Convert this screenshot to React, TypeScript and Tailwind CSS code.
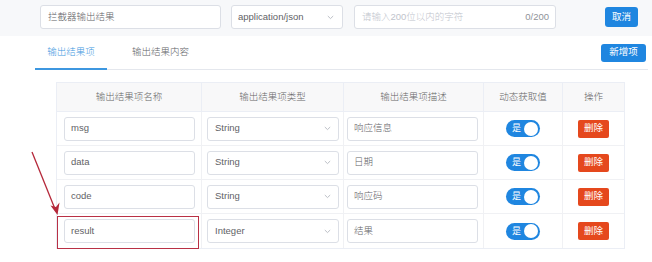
import React from "react";

const font = { fontFamily: '"Liberation Sans", "Noto Sans CJK SC", sans-serif' };

function Chevron() {
  return (
    <svg width="7" height="5" viewBox="0 0 7 5" className="shrink-0">
      <path d="M0.8 1 L3.5 3.6 L6.2 1" fill="none" stroke="#b4b8bf" strokeWidth="0.9" />
    </svg>
  );
}

function Toggle() {
  return (
    <div className="w-[34px] h-[17px] rounded-full bg-[#1f86e0] flex items-center justify-between pl-[6px] pr-[2px]">
      <span className="text-white text-[9px] leading-none font-normal">是</span>
      <span className="w-[14px] h-[14px] rounded-full bg-white"></span>
    </div>
  );
}

const rows = [
  { name: "msg", type: "String", desc: "响应信息" },
  { name: "data", type: "String", desc: "日期" },
  { name: "code", type: "String", desc: "响应码" },
  { name: "result", type: "Integer", desc: "结果" },
];

export default function App() {
  return (
    <div className="relative w-[652px] h-[262px] bg-white overflow-hidden text-[#5f6266] font-light" style={font}>
      {/* top bar */}
      <div className="h-[36px] bg-[#f7f8fa] flex items-start pt-[5px] pl-[40px]">
        <div className="w-[181px] h-[24px] bg-white border border-[#dcdfe6] rounded-[3px] flex items-center pl-[7px] text-[9.5px]">
          拦截器输出结果
        </div>
        <div className="ml-[10px] w-[112px] h-[24px] bg-white border border-[#dcdfe6] rounded-[3px] flex items-center justify-between pl-[6px] pr-[8px] text-[9.5px]">
          <span>application/json</span>
          <Chevron />
        </div>
        <div className="ml-[11px] w-[202px] h-[24px] bg-white border border-[#dcdfe6] rounded-[3px] flex items-center justify-between pl-[7px] pr-[6px] text-[9.5px]">
          <span className="text-[#c0c4cc]">请输入200位以内的字符</span>
          <span className="text-[#909399]">0/200</span>
        </div>
        <div className="ml-auto mr-[14px] mt-[2px] w-[33px] h-[20px] rounded-[3px] bg-[#1f86e0] text-white text-[9.5px] font-normal flex items-center justify-center">
          取消
        </div>
      </div>

      {/* tabs */}
      <div className="ml-[35px] mr-[4px] h-[34px] border-b border-[#e4e7ed] flex items-center relative">
        <div className="relative w-[72px] h-full flex items-center justify-center text-[9.5px] text-[#3d97e0]">
          输出结果项
          <div className="absolute left-0 right-0 bottom-[-1px] h-[2px] bg-[#3d97e0]"></div>
        </div>
        <div className="ml-[25px] text-[9.5px] text-[#606266]">输出结果内容</div>
        <div className="ml-auto mr-[2px] w-[45px] h-[18px] rounded-[3px] bg-[#1f86e0] text-white text-[9.5px] font-normal flex items-center justify-center">
          新增项
        </div>
      </div>

      {/* table */}
      <div className="ml-[56px] mt-[12px] w-[569px] border border-[#ebeef5] text-[9.5px]">
        <div className="flex h-[29px] bg-[#f8f8f9] text-[#666] border-b border-[#ebeef5]">
          <div className="w-[145px] flex items-center justify-center border-r border-[#ebeef5]">输出结果项名称</div>
          <div className="w-[142px] flex items-center justify-center border-r border-[#ebeef5]">输出结果项类型</div>
          <div className="w-[140px] flex items-center justify-center border-r border-[#ebeef5]">输出结果项描述</div>
          <div className="w-[79px] flex items-center justify-center border-r border-[#ebeef5]">动态获取值</div>
          <div className="flex-1 flex items-center justify-center">操作</div>
        </div>
        {rows.map((r, i) => (
          <div key={r.name} className={"flex h-[34px] " + (i < rows.length - 1 ? "border-b border-[#f0f1f4]" : "")}>
            <div className="w-[145px] flex items-center pl-[7px] pr-[6px] border-r border-[#f0f1f4]">
              <div className="w-full h-[24px] border border-[#dcdfe6] rounded-[3px] flex items-center pl-[6px]">{r.name}</div>
            </div>
            <div className="w-[142px] flex items-center pl-[5px] pr-[4px] border-r border-[#f0f1f4]">
              <div className="w-full h-[24px] border border-[#dcdfe6] rounded-[3px] flex items-center justify-between pl-[7px] pr-[7px]">
                <span>{r.type}</span>
                <Chevron />
              </div>
            </div>
            <div className="w-[140px] flex items-center pl-[3px] pr-[5px] border-r border-[#f0f1f4]">
              <div className="w-full h-[24px] border border-[#dcdfe6] rounded-[3px] flex items-center pl-[6px]">{r.desc}</div>
            </div>
            <div className="w-[79px] flex items-center justify-center border-r border-[#f0f1f4]">
              <Toggle />
            </div>
            <div className="flex-1 flex items-center justify-center">
              <div className="w-[31px] h-[18px] rounded-[2px] bg-[#e5481d] text-white text-[9.5px] font-normal flex items-center justify-center">删除</div>
            </div>
          </div>
        ))}
      </div>

      {/* annotation */}
      <div className="absolute left-[57px] top-[216px] w-[142px] h-[33px] border border-[#b93045]"></div>
      <svg className="absolute left-0 top-0" width="652" height="262" viewBox="0 0 652 262">
        <line x1="32" y1="152" x2="55" y2="209" stroke="#b5283a" strokeWidth="1.3" />
        <path d="M57.5 215 L50.5 205.5 L56 207 L59.5 202.5 Z" fill="#b5283a" />
      </svg>
    </div>
  );
}
